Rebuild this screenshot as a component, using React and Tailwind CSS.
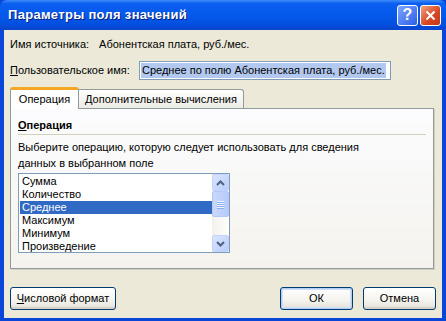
import React from 'react'

const font = { fontFamily: '"Liberation Sans", Arial, sans-serif' }

const items = ['Сумма', 'Количество', 'Среднее', 'Максимум', 'Минимум', 'Произведение']

const XpButton = ({ children, isDefault, className = '' }) => (
  <button
    className={`h-[23px] rounded-[3px] border border-[#003c74] bg-[linear-gradient(#ffffff,#f4f3ee_60%,#e3e0d6)] text-[11px] text-black flex items-center justify-center ${
      isDefault ? 'shadow-[inset_0_0_0_1px_#b7cdf3,inset_0_0_0_2px_#cfdff8]' : 'shadow-[inset_0_-2px_0_#d6d0c5]'
    } ${className}`}
  >
    {children}
  </button>
)

const ScrollBtn = ({ up }) => (
  <div className="w-[17px] h-[17px] rounded-[2px] border border-[#c3d3fd] bg-[linear-gradient(135deg,#dbe6fe,#b8cdfb)] flex items-center justify-center">
    <svg width="9" height="6" viewBox="0 0 9 6">
      <path
        d={up ? 'M1 5 L4.5 1.5 L8 5' : 'M1 1 L4.5 4.5 L8 1'}
        fill="none"
        stroke="#4d6185"
        strokeWidth="2"
      />
    </svg>
  </div>
)

export default function App() {
  return (
    <div className="w-[446px] h-[321px] flex flex-col bg-[#0a46d8]" style={font}>
      {/* title bar */}
      <div className="h-[30px] shrink-0 rounded-t-[7px] bg-[linear-gradient(#3e8cf9,#0a5ef0_12%,#0559ea_50%,#0350e0_80%,#0a44cc)] flex items-center pl-[8px] pr-[5px]">
        <div className="flex-1 text-white font-bold text-[13px] [text-shadow:1px_1px_0_#0a1e7a] tracking-[0.3px]">
          Параметры поля значений
        </div>
        <div className="w-[21px] h-[21px] rounded-[3px] border border-white bg-[linear-gradient(135deg,#7ea5ff,#2b5fe8)] flex items-center justify-center text-white font-bold text-[16px] leading-none">
          ?
        </div>
        <div className="ml-[2px] w-[21px] h-[21px] rounded-[3px] border border-white bg-[linear-gradient(135deg,#f0a080,#d84520_60%,#c23a1a)] flex items-center justify-center">
          <svg width="11" height="11" viewBox="0 0 11 11">
            <path d="M1.5 1.5 L9.5 9.5 M9.5 1.5 L1.5 9.5" stroke="white" strokeWidth="2" />
          </svg>
        </div>
      </div>

      {/* body */}
      <div className="flex-1 mx-[4px] mb-[3px] bg-[#ece9d8] px-[6px] text-[11px] text-black flex flex-col whitespace-nowrap">
        <div className="mt-[8px] h-[13px] flex items-center gap-[10px]">
          <span>Имя источника:</span>
          <span>Абонентская плата, руб./мес.</span>
        </div>

        <div className="mt-[10px] h-[19px] flex items-center">
          <span className="w-[129px] shrink-0">
            <u>П</u>ользовательское имя:
          </span>
          <div className="w-[252px] h-[19px] border border-[#7f9db9] bg-white flex items-center px-[1px]">
            <span className="bg-[#b2c8ee] px-[1px] leading-[15px]">Среднее по полю Абонентская плата, руб./мес.</span>
          </div>
        </div>

        {/* tabs */}
        <div className="mt-[7px] flex items-end h-[22px] relative z-10">
          <div className="h-[22px] w-[69px] bg-white border border-[#919b9c] border-b-0 rounded-t-[3px] border-t-[3px] border-t-[#f5a623] flex items-center justify-center">
            Операция
          </div>
          <div className="h-[19px] mb-[1px] px-[6px] bg-[linear-gradient(#ffffff,#ecebe5)] border border-[#919b9c] border-l-0 border-b-0 rounded-tr-[3px] flex items-center">
            Дополнительные вычисления
          </div>
        </div>

        <div className="w-[424px] h-[161px] -mt-[1px] border border-[#919b9c] bg-[linear-gradient(#fcfcfe,#f4f3ee)] px-[7px] pt-[10px] flex flex-col shadow-[1px_1px_0_#d0cec4]">
          <div className="font-bold leading-[13px]">
            <u>О</u>перация
          </div>
          <div className="mt-[2px] border-t border-[#d0d0bf]" />
          <div className="mt-[4px] leading-[16px]">
            Выберите операцию, которую следует использовать для сведения
            <br />
            данных в выбранном поле
          </div>
          <div className="mt-[2px] w-[212px] h-[80px] border border-[#7f9db9] bg-white flex">
            <div className="flex-1 flex flex-col pt-[1px] pl-[1px]">
              {items.map((it) => (
                <div
                  key={it}
                  className={`h-[13px] leading-[13px] px-[2px] ${
                    it === 'Среднее' ? 'bg-[#316ac5] text-white' : ''
                  }`}
                >
                  {it}
                </div>
              ))}
            </div>
            <div className="w-[17px] bg-[linear-gradient(90deg,#f3f1ec,#fefefb)] flex flex-col">
              <ScrollBtn up />
              <div className="h-[26px] rounded-[2px] border border-[#b4c8f6] bg-[linear-gradient(90deg,#c9d8fc,#b6cbf9)] flex flex-col items-center justify-center gap-[1px]">
                {[0, 1, 2, 3].map((i) => (
                  <div key={i} className="w-[7px] h-[1px] bg-[#eef4fe] shadow-[0_1px_0_#8caef0]" />
                ))}
              </div>
              <div className="flex-1" />
              <ScrollBtn />
            </div>
          </div>
        </div>

        {/* buttons */}
        <div className="mt-[18px] flex items-center">
          <XpButton className="w-[106px]">
            <span>
              <u>Ч</u>исловой формат
            </span>
          </XpButton>
          <div className="flex-1" />
          <XpButton isDefault className="w-[73px]">
            ОК
          </XpButton>
          <XpButton className="ml-[10px] w-[73px]">Отмена</XpButton>
        </div>
      </div>
    </div>
  )
}
